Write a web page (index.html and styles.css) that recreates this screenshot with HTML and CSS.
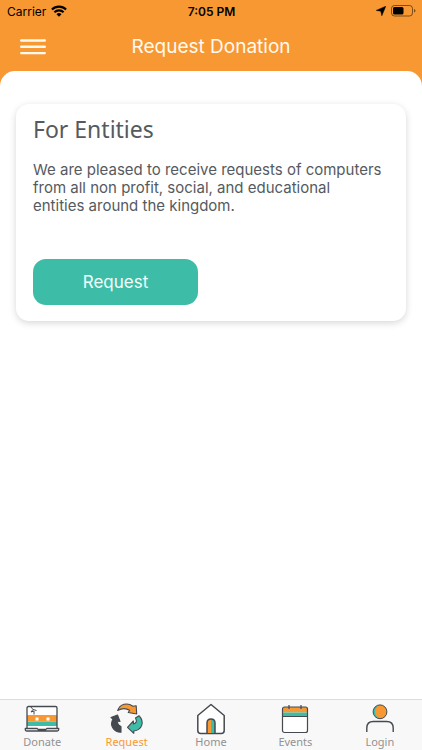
FILE: index.html
```html
<!DOCTYPE html>
<html lang="en">
<head>
<meta charset="utf-8">
<meta name="viewport" content="width=device-width, initial-scale=1">
<title>Request Donation</title>
<link rel="stylesheet" href="styles.css">
</head>
<body>
<div class="status">
  <div class="status-side">
    <span>Carrier</span>
    <svg width="16" height="12" viewBox="0 0 16 12" fill="none" stroke="#000" stroke-width="2.1"><path d="M.9 4.5a10.2 10.2 0 0 1 14.2 0M3.4 7.2a6.6 6.6 0 0 1 9.2 0"/><path d="M8 11.7 5.5 9.2a3.7 3.7 0 0 1 5 0z" fill="#000" stroke="none"/></svg>
  </div>
  <span class="time">7:05 PM</span>
  <div class="status-side status-end">
    <svg width="10" height="10" viewBox="0 0 10 10"><path d="M9.8.2 5.8 9.8 4.8 5.2.2 4.400z" stroke="#000" stroke-width=".5"/></svg>
    <svg width="25" height="12" viewBox="0 0 25 12"><rect x=".5" y=".5" width="21" height="10.5" rx="3" fill="none" stroke="#000" stroke-opacity=".5"/><rect x="2" y="2" width="10.5" height="7.5" rx="1.5"/><path d="M23 4q1.5.5 1.5 1.8T23 7.6z" fill-opacity=".5"/></svg>
  </div>
</div>
<header class="navbar">
  <button class="menu" aria-label="Menu">
    <svg width="26" height="16" viewBox="0 0 26 16" stroke="#fffaf0" stroke-width="2.4" stroke-linecap="round"><path d="M1.2 1.5h23.6M1.2 7.8h23.6M1.2 14.1h23.6"/></svg>
  </button>
  <h1>Request Donation</h1>
</header>
<main>
  <section class="card">
    <h2>For Entities</h2>
    <p>We are pleased to receive requests of computers<br>from all non profit, social, and educational<br>entities around the kingdom.</p>
    <button class="request">Request</button>
  </section>
</main>
<nav class="tabs">
  <a href="#donate">
    <svg width="36" height="32" viewBox="0 0 36 32"><path d="M3 4h30v22H3z" fill="#fff"/><path d="M3 12h30v6.500H3z" fill="#f89832"/><path d="M3 18.500h30v4.500H3z" fill="#3dbda7"/><path d="M11.500 14.500h3v3h-3zM22.500 14.500h3v3h-3z" fill="#fff"/><g fill="none" stroke="#454a50" stroke-width="1.300" stroke-linejoin="round"><path d="M3 25.500V5q0-1.500 1.500-1.500h27Q33 3.500 33 5v20.500"/><path d="M1.300 25.500h12l.7 1h8l.7-1h12v1q0 1.500-1.500 1.500H2.800q-1.500 0-1.500-1.500z" fill="#fff"/><path d="m6.500 3.500 2.500 3-2 2.500 3-1v3.500M9 6.500l3.500 1" stroke-width="1"/></g></svg>
    <span>Donate</span>
  </a>
  <a href="#request" class="active" aria-current="page">
    <svg width="36" height="32" viewBox="0 0 36 32" stroke="#454a50" stroke-width="1.100" stroke-linejoin="round"><path d="M8.700 7.500C11 1 18-1 24 3.200l3.200-.4.500 8.200-8.500-1.500 1.500-2.200C17 5 13 5 8.700 7.500z" fill="#f89832"/><path d="M30 12.700C36 19 33 27 24.800 28v2.300L18.500 24.300 24.400 18v3C28 20 28 18 26.500 15z" fill="#3dbda7"/><path d="M12 29.300C4 29 .5 22 4 16l-2-1.500 6.500-2.500L11 18.500l-2.300-.5c-.5 2.500.5 4.500 3.300 5.500z" fill="#454a50"/></svg>
    <span>Request</span>
  </a>
  <a href="#home">
    <svg width="36" height="32" viewBox="0 0 36 32" fill="none" stroke="#454a50" stroke-width="1.500" stroke-linejoin="round"><path d="M18 1.500 31.200 12.500v15q0 3-3 3H7.800q-3 0-3-3v-15z" fill="#fff"/><path d="M14 30V20q0-4 4-4v14z" fill="#f89832" stroke="none"/><path d="M18 30V16q4 0 4 4v10z" fill="#3dbda7" stroke="none"/><path d="M14 30.500V20q0-4 4-4t4 4v10.500"/></svg>
    <span>Home</span>
  </a>
  <a href="#events">
    <svg width="36" height="32" viewBox="0 0 36 32"><rect x="5.500" y="4" width="25" height="25.500" rx="2" fill="#fff"/><path d="M5.500 9.500v-4Q5.500 4 7 4h22q1.500 0 1.500 1.500v4z" fill="#f89832"/><path d="M5.500 9.500h25v4h-25z" fill="#3dbda7"/><g fill="none" stroke="#454a50" stroke-width="1.200"><rect x="5.500" y="4" width="25" height="25.500" rx="2"/><path d="M5.500 13.500h25M12 2v4M24 2v4"/></g></svg>
    <span>Events</span>
  </a>
  <a href="#login">
    <svg width="36" height="32" viewBox="0 0 36 32"><circle cx="18" cy="8.800" r="6.900" fill="#3dbda7"/><path d="M18 1.900a6.900 6.900 0 0 1 0 13.800q-5-2.500-5-6.900t5-6.900z" fill="#f89832"/><g fill="none" stroke="#454a50" stroke-width="1"><circle cx="18" cy="8.800" r="6.900"/><path d="M4.800 29v-4q0-6.500 6.500-6.500h13.400q6.500 0 6.500 6.500v4" stroke-width="1.400"/></g></svg>
    <span>Login</span>
  </a>
</nav>
</body>
</html>
```
FILE: styles.css
```css
* {
  box-sizing: border-box;
}

body {
  margin: 0;
  min-height: 100vh;
  display: flex;
  flex-direction: column;
  background: #f89832;
  color: #555a60;
  font-family: Inter, "Liberation Sans", sans-serif;
}

h1, h2, p {
  margin: 0;
}

button {
  border: 0;
  padding: 0;
  font-family: inherit;
}

svg {
  display: block;
}

.status {
  display: grid;
  grid-template-columns: 1fr auto 1fr;
  align-items: center;
  height: 22px;
  padding: 0 6px 0 7px;
  color: #000;
  font-size: 12px;
}

.status-side {
  display: flex;
  align-items: center;
  gap: 5px;
}

.status-end {
  justify-content: flex-end;
}

.time {
  font-weight: 600;
}

.navbar {
  display: grid;
  grid-template-columns: 48px 1fr 48px;
  align-items: center;
  height: 49px;
  padding: 0 20px;
}

.menu {
  justify-self: start;
  background: none;
}

.navbar h1 {
  color: #fffaf0;
  font-size: 19px;
  line-height: 24px;
  font-weight: 400;
  text-align: center;
}

main {
  flex: 1;
  padding: 33px 16px 16px;
  border-radius: 15px 15px 0 0;
  background: #fff;
}

.card {
  padding: 11px 17px 16px;
  border-radius: 13px;
  background: #fff;
  box-shadow: 0 2px 7px rgba(0, 0, 0, .16);
}

.card h2 {
  font-family: "Noto Sans", sans-serif;
  font-size: 23px;
  line-height: 28px;
  font-weight: 400;
}

.card p {
  margin-top: 18px;
  font-size: 15px;
  line-height: 18px;
}

.request {
  display: block;
  width: 165px;
  height: 46px;
  margin-top: 44px;
  border-radius: 13px;
  background: #3dbda7;
  color: #f0fffc;
  font-size: 17px;
}

.tabs {
  display: grid;
  grid-template-columns: repeat(5, 1fr);
  height: 51px;
  border-top: 1px solid #dcdcdc;
  background: #f8f8f8;
}

.tabs a {
  display: flex;
  flex-direction: column;
  align-items: center;
  padding-top: 3px;
  color: #929292;
  font-family: "Noto Sans", sans-serif;
  font-size: 11px;
  line-height: 14px;
  text-decoration: none;
}

.tabs .active {
  color: #f89832;
}
```
